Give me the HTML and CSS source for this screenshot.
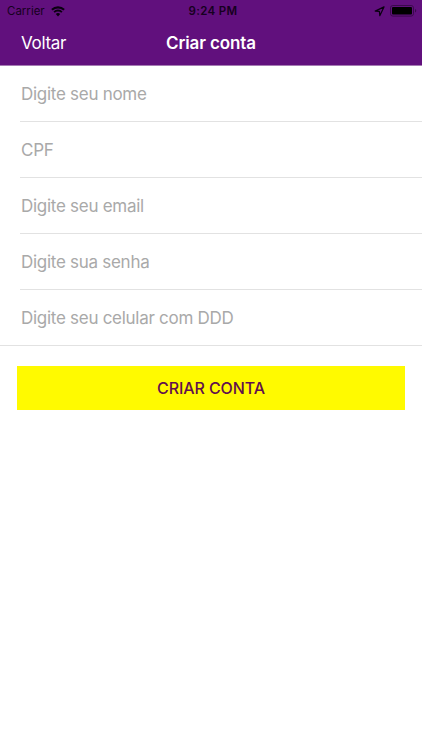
FILE: index.html
```html
<!DOCTYPE html>
<html lang="pt-BR">
<head>
	<meta charset="UTF-8">
	<meta name="viewport" content="width=device-width, initial-scale=1.0">
	<title>Criar conta</title>
	<link rel="stylesheet" href="styles.css">
</head>
<body>
	<header class="header">
		<div class="status">
			<div class="status-left">
				<span class="carrier">Carrier</span>
				<svg class="wifi" width="14" height="11" viewBox="0 0 14 11">
					<path d="M0.9 3.8 A8.8 8.8 0 0 1 13.1 3.8" fill="none" stroke="#0a0010" stroke-width="2.1"/>
					<path d="M3.1 6.1 A5.6 5.6 0 0 1 10.9 6.1" fill="none" stroke="#0a0010" stroke-width="1.9"/>
					<path d="M7 10.4 L4.8 8.1 A3.1 3.1 0 0 1 9.2 8.1 Z" fill="#0a0010"/>
				</svg>
			</div>
			<span class="time">9:24 PM</span>
			<div class="status-right">
				<svg width="11" height="11" viewBox="0 0 11 11">
					<path d="M10 0.9 L1.2 5.1 L5.4 5.4 L5.8 9.7 Z" fill="none" stroke="#0a0010" stroke-width="1.2" stroke-linejoin="round"/>
				</svg>
				<svg width="27" height="12" viewBox="0 0 27 12">
					<rect x="0.5" y="0.5" width="23" height="10.6" rx="2.4" fill="none" stroke="#3a0a4c"/>
					<rect x="2" y="2" width="20" height="7.6" rx="1" fill="#000"/>
					<path d="M25 4 C26.7 4.6 26.7 7 25 7.6 Z" fill="#3a0a4c"/>
				</svg>
			</div>
		</div>
		<nav class="nav">
			<a class="back">Voltar</a>
			<h1 class="title">Criar conta</h1>
		</nav>
	</header>

	<form>
		<div class="fields">
			<div class="item"><input class="input" type="text" placeholder="Digite seu nome"></div>
			<div class="item"><input class="input" type="text" placeholder="CPF"></div>
			<div class="item"><input class="input" type="email" placeholder="Digite seu email"></div>
			<div class="item"><input class="input" type="password" placeholder="Digite sua senha"></div>
			<div class="item"><input class="input" type="tel" placeholder="Digite seu celular com DDD"></div>
		</div>
		<button class="button" type="button">CRIAR CONTA</button>
	</form>
</body>
</html>
```
FILE: styles.css
```css
* {
	box-sizing: border-box;
}
body {
	margin: 0;
	background-color: #fff;
	font-family: Inter, "Liberation Sans", sans-serif;
}
.header {
	height: 66px;
	background-color: #61107d;
	border-bottom: 1px solid #a57bb3;
}
.status {
	display: grid;
	grid-template-columns: 1fr auto 1fr;
	align-items: center;
	height: 22px;
	padding: 0 5px 0 7px;
	color: #160020;
	font-size: 11.5px;
}
.status-left,
.status-right {
	display: flex;
	align-items: center;
}
.status-left {
	gap: 6px;
}
.status-right {
	justify-content: flex-end;
	gap: 5px;
}
.time {
	padding-left: 2px;
	font-weight: 600;
	letter-spacing: 0.35px;
}
.nav {
	display: grid;
	grid-template-columns: 1fr auto 1fr;
	align-items: center;
	height: 42px;
	padding: 0 21px;
	color: #fff;
}
.back {
	font-size: 17px;
	letter-spacing: -0.3px;
}
.title {
	margin: 0;
	font-size: 17px;
	font-weight: 600;
	letter-spacing: -0.12px;
}
.fields {
	border-bottom: 1px solid #e2e2e2;
}
.item {
	height: 56px;
	margin-left: 20px;
	border-bottom: 1px solid #e2e2e2;
}
.item:last-child {
	height: 55px;
	border-bottom: 0;
}
.input {
	display: block;
	width: 100%;
	height: 55px;
	padding: 0 0 0 1px;
	border: 0;
	outline: 0;
	background: none;
	font-family: inherit;
	font-size: 17px;
	letter-spacing: -0.28px;
}
.input::placeholder {
	color: #a9a9a9;
	opacity: 1;
}
.button {
	display: block;
	width: 388px;
	height: 44px;
	margin: 20px auto 0;
	padding: 0;
	border: 0;
	background-color: #fffa00;
	color: #61104d;
	font-family: inherit;
	font-size: 16px;
	font-weight: 500;
	letter-spacing: -0.1px;
}
```
